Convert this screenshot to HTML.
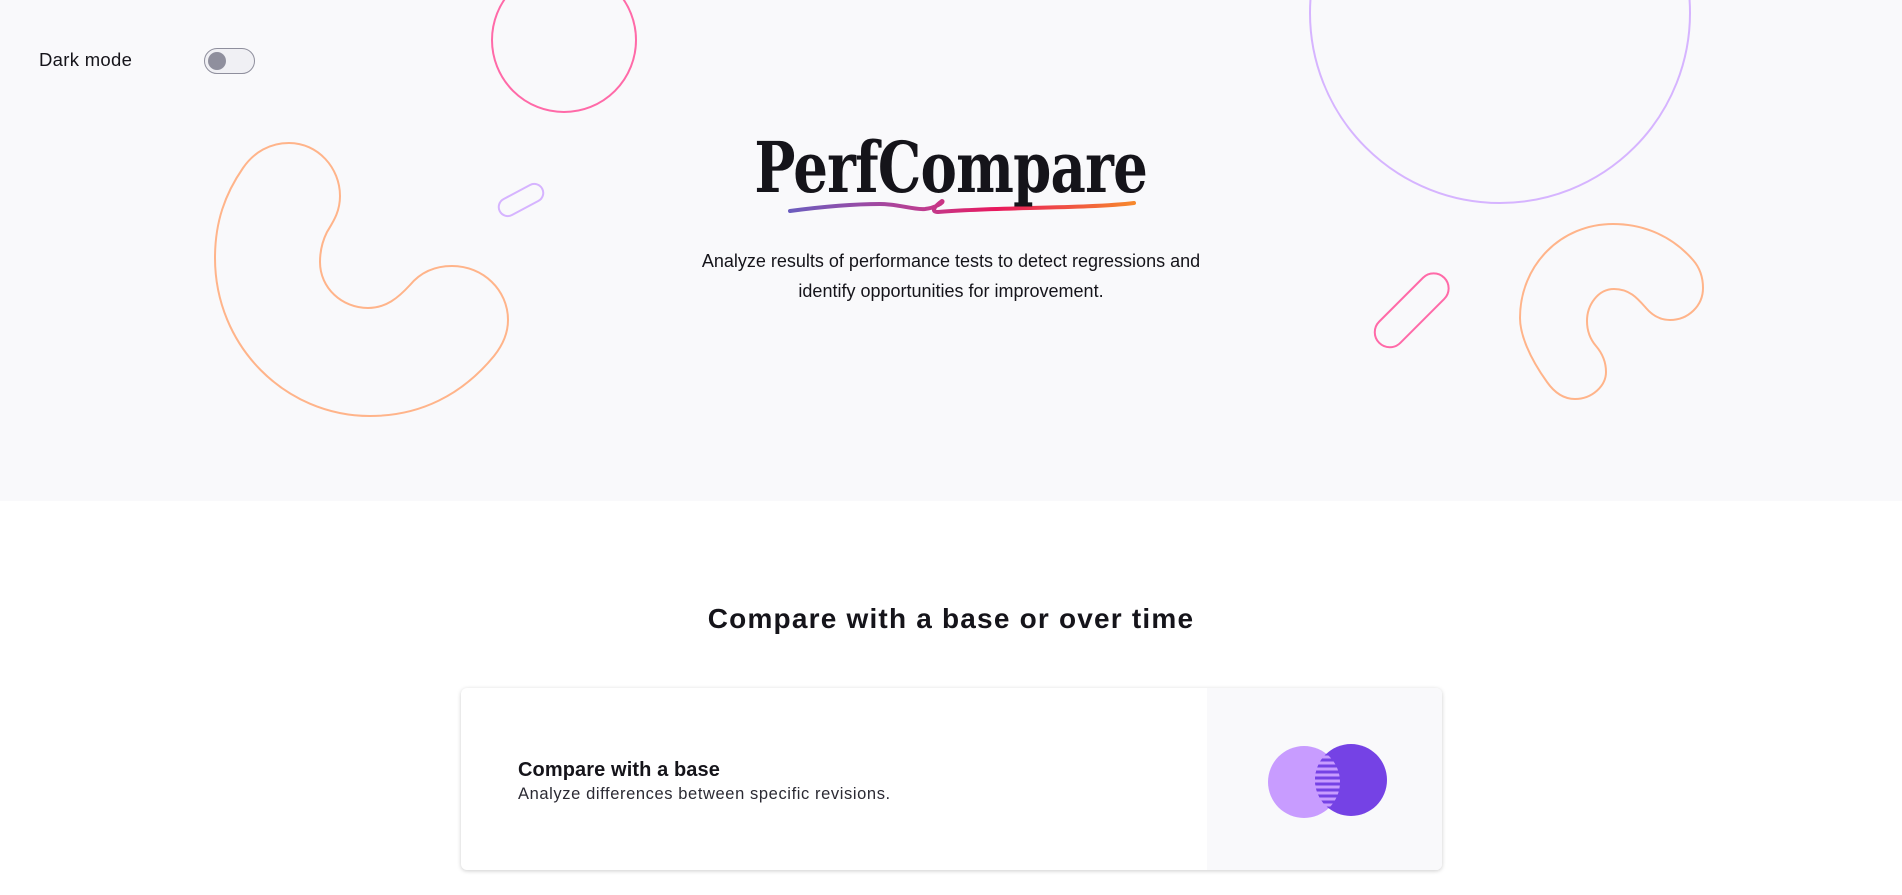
<!DOCTYPE html>
<html><head><meta charset="utf-8"><style>
html,body{margin:0;padding:0;width:1902px;height:895px;overflow:hidden;background:#fff;font-family:"Liberation Sans",sans-serif;color:#15141a}
.hero{position:absolute;left:0;top:0;width:1902px;height:501px;background:#f9f9fb}
svg.bg{position:absolute;left:0;top:0}
.dm{position:absolute;left:39px;top:49px;font-size:18.5px;line-height:22px;letter-spacing:0.3px}
.tg{position:absolute;left:204px;top:48px;width:49px;height:24px;border:1px solid #8f8f9d;border-radius:14px;background:#f0f0f4}
.tg i{position:absolute;left:3px;top:3px;width:18px;height:18px;border-radius:50%;background:#8f8f9d}
.title{position:absolute;left:0;width:1902px;top:128px;text-align:center;font-family:"DejaVu Serif",serif;font-weight:bold;font-size:70px;line-height:80px;color:#15141a}
.title span{display:inline-block;transform:scaleX(0.78);letter-spacing:-1px}
.sub{position:absolute;left:0;width:1902px;top:246px;text-align:center;font-size:18px;line-height:30px;color:#15141a}
h2{position:absolute;left:0;width:1902px;top:602px;margin:0;text-align:center;font-size:28px;font-weight:bold;line-height:34px;letter-spacing:1.2px}
.card{position:absolute;left:461px;top:688px;width:981px;height:182px;background:#fff;border-radius:6px;box-shadow:0 1px 4px rgba(0,0,0,.2);overflow:hidden}
.card .rp{position:absolute;left:746px;top:0;width:235px;height:182px;background:#f9f9fb}
.ct{position:absolute;left:57px;top:70px;font-size:20px;line-height:24px;font-weight:bold;letter-spacing:0.1px}
.cd{position:absolute;left:57px;top:96px;font-size:16.5px;line-height:20px;color:#2b2a33;letter-spacing:0.6px}
</style></head><body>
<div class="hero"></div>
<svg class="bg" width="1902" height="501" viewBox="0 0 1902 501">
<defs><linearGradient id="g" x1="788" y1="0" x2="1134" y2="0" gradientUnits="userSpaceOnUse">
<stop offset="0" stop-color="#6a5dbf"/><stop offset="0.4" stop-color="#c03c8f"/><stop offset="0.6" stop-color="#e8175d"/><stop offset="1" stop-color="#f7892c"/></linearGradient></defs>
<circle cx="564" cy="40" r="72" fill="none" stroke="#ff6aa8" stroke-width="2"/>
<circle cx="1500" cy="13" r="190" fill="none" stroke="#d6b4ff" stroke-width="2"/>
<path d="M289,143 C318,143 340,168 340,196 C340,212 333,222 327,232 C322,242 320,252 320,262 C320,288 342,308 368,308 C386,308 398,298 410,285 C420,273 434,266 452,266 C483,266 508,290 508,320 C508,334 502,346 494,356 C462,395 420,416 370,416 C285,416 215,346 215,258 C215,222 225,194 243,168 C254,152 270,143 289,143 Z" fill="none" stroke="#ffb48a" stroke-width="2"/>
<path d="M1613,224 C1645,224 1673,237 1693,260 C1700,268 1703,278 1703,288 C1703,306 1688,320 1670,320 C1660,320 1652,315 1646,308 C1638,299 1630,289 1614,289 C1598,289 1587,305 1587,321 C1587,331 1590,339 1596,346 C1602,353 1606,362 1606,372 C1606,386 1592,399 1575,399 C1563,399 1554,392 1547,382 C1529,357 1520,334 1520,318 C1520,265 1561,224 1613,224 Z" fill="none" stroke="#ffb48a" stroke-width="2"/>
<rect x="497" y="191" width="48" height="18" rx="9" transform="rotate(-28 521 200)" fill="none" stroke="#d6b4ff" stroke-width="2"/>
<rect x="1366" y="296" width="92" height="30" rx="15" transform="rotate(-45 1411 311)" fill="none" stroke="#ff6aa8" stroke-width="2"/>
<path d="M790,211 C820,207 850,204 880,204 C900,204 912,210 925,209 C935,208 945,202 942,201 C935,206 930,212 938,212 C960,210 990,209 1030,208 C1070,207 1110,206 1134,203" fill="none" stroke="url(#g)" stroke-width="4" stroke-linecap="round" stroke-linejoin="round"/>
</svg>
<div class="dm">Dark mode</div>
<div class="tg"><i></i></div>
<div class="title"><span>PerfCompare</span></div>
<div class="sub">Analyze results of performance tests to detect regressions and<br>identify opportunities for improvement.</div>
<h2>Compare with a base or over time</h2>
<div class="card"><div class="rp"></div>
<div class="ct">Compare with a base</div>
<div class="cd">Analyze differences between specific revisions.</div>
</div>
<svg style="position:absolute;left:0;top:0" width="1902" height="895" viewBox="0 0 1902 895">
<defs><clipPath id="ov2"><circle cx="1304" cy="782" r="36"/></clipPath></defs>
<circle cx="1304" cy="782" r="36" fill="#c89cff"/>
<circle cx="1351" cy="780" r="36" fill="#7542e5"/>
<g clip-path="url(#ov2)"><circle cx="1351" cy="780" r="36" fill="#7542e5"/>
<g stroke="#c89cff" stroke-width="3">
<line x1="1312" y1="757" x2="1345" y2="757"/><line x1="1312" y1="763" x2="1345" y2="763"/><line x1="1312" y1="769" x2="1345" y2="769"/><line x1="1312" y1="775" x2="1345" y2="775"/><line x1="1312" y1="781" x2="1345" y2="781"/><line x1="1312" y1="787" x2="1345" y2="787"/><line x1="1312" y1="793" x2="1345" y2="793"/><line x1="1312" y1="799" x2="1345" y2="799"/><line x1="1312" y1="805" x2="1345" y2="805"/></g></g>
</svg>
</body></html>
